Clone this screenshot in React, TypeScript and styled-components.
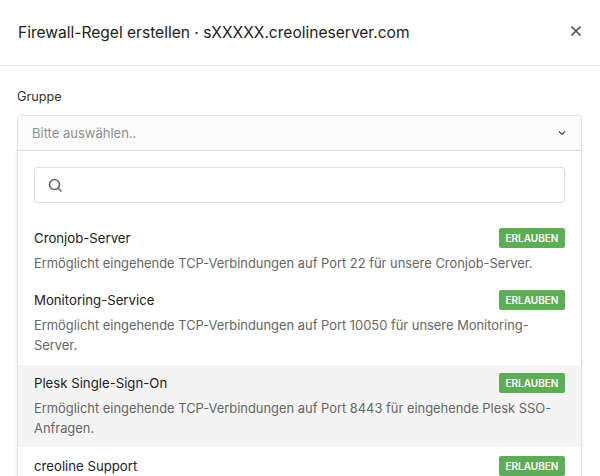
import React from "react";
import styled, { createGlobalStyle } from "styled-components";

const Global = createGlobalStyle`
  html, body { margin: 0; padding: 0; background: #fff; }
  body { width: 600px; height: 476px; overflow: hidden; font-family: Inter, "Liberation Sans", sans-serif; }
`;

const Modal = styled.div`
  width: 600px;
  height: 476px;
  overflow: hidden;
  background: #fff;
  color: #212529;
`;

const Header = styled.header`
  height: 66px;
  box-sizing: border-box;
  border-bottom: 1px solid #e4e4e4;
  padding: 0 18px;
  display: flex;
  align-items: center;
  justify-content: space-between;
`;

const Title = styled.h1`
  margin: 0;
  font-size: 15.55px;
  font-weight: 400;
  color: #222;
`;

const CloseIcon = styled.svg`
  width: 10px;
  height: 10px;
  margin: -3px 1px 0 0;
  stroke: #555;
  stroke-width: 1.6;
`;

const Body = styled.div`
  padding: 22px 18px 0 17px;
`;

const Label = styled.div`
  font-size: 12.7px;
  line-height: 18px;
  color: #333;
  margin-bottom: 9px;
`;

const Select = styled.div`
  height: 36px;
  box-sizing: border-box;
  background: #fbfbfb;
  border: 1px solid #e2e2e2;
  border-radius: 3px 3px 0 0;
  padding: 0 15px 0 14px;
  display: flex;
  align-items: center;
  justify-content: space-between;
  font-size: 13px;
  color: #8f8f8f;
`;

const Chevron = styled.svg`
  width: 8px;
  height: 6px;
  fill: none;
  stroke: #444;
  stroke-width: 1.2;
`;

const Menu = styled.div`
  border: 1px solid #e2e2e2;
  border-top: none;
  box-shadow: 0 1px 4px rgba(0, 0, 0, 0.08);
  padding: 16px 0 0;
`;

const SearchBox = styled.div`
  height: 36px;
  box-sizing: border-box;
  margin: 0 16px;
  border: 1px solid #dedede;
  border-radius: 3px;
  display: flex;
  align-items: center;
  padding-left: 13px;
`;

const SearchIcon = styled.svg`
  width: 15px;
  height: 15px;
  fill: none;
  stroke: #666;
  stroke-width: 1.6;
`;

const List = styled.div`
  margin-top: 17px;
`;

const Row = styled.div<{ $active?: boolean }>`
  padding: 8px 16px 6.9px;
  margin-bottom: 1px;
  background: ${(p) => (p.$active ? "#f4f4f4" : "transparent")};
`;

const RowHead = styled.div`
  display: flex;
  align-items: center;
  justify-content: space-between;
  height: 20px;
  margin-bottom: 5.6px;
`;

const RowTitle = styled.div`
  font-size: 13.2px;
  color: #222;
`;

const Badge = styled.span`
  width: 66px;
  height: 20px;
  box-sizing: border-box;
  background: #5cad55;
  border-radius: 2px;
  color: #fff;
  font-size: 10px;
  font-weight: 600;
  display: flex;
  align-items: center;
  justify-content: center;
`;

const Desc = styled.div`
  font-size: 12.9px;
  line-height: 20.7px;
  color: #666;
`;

const rows: { t: string; d?: string; active?: boolean }[] = [
  { t: "Cronjob-Server", d: "Ermöglicht eingehende TCP-Verbindungen auf Port 22 für unsere Cronjob-Server." },
  { t: "Monitoring-Service", d: "Ermöglicht eingehende TCP-Verbindungen auf Port 10050 für unsere Monitoring-Server." },
  { t: "Plesk Single-Sign-On", d: "Ermöglicht eingehende TCP-Verbindungen auf Port 8443 für eingehende Plesk SSO-Anfragen.", active: true },
  { t: "creoline Support" },
];

export default function App() {
  return (
    <Modal>
      <Global />
      <Header>
        <Title>Firewall-Regel erstellen · sXXXXX.creolineserver.com</Title>
        <CloseIcon viewBox="0 0 10 10">
          <path d="M0.5 0.5L9.5 9.5M9.5 0.5L0.5 9.5" />
        </CloseIcon>
      </Header>
      <Body>
        <Label>Gruppe</Label>
        <Select>
          Bitte auswählen..
          <Chevron viewBox="0 0 8 6">
            <path d="M1 1.5L4 4.5L7 1.5" />
          </Chevron>
        </Select>
        <Menu>
          <SearchBox>
            <SearchIcon viewBox="0 0 15 15">
              <circle cx="6.5" cy="6.5" r="5" />
              <path d="M10.2 10.2L13.5 13.5" />
            </SearchIcon>
          </SearchBox>
          <List>
            {rows.map((r) => (
              <Row key={r.t} $active={r.active}>
                <RowHead>
                  <RowTitle>{r.t}</RowTitle>
                  <Badge>ERLAUBEN</Badge>
                </RowHead>
                {r.d && <Desc>{r.d}</Desc>}
              </Row>
            ))}
          </List>
        </Menu>
      </Body>
    </Modal>
  );
}
